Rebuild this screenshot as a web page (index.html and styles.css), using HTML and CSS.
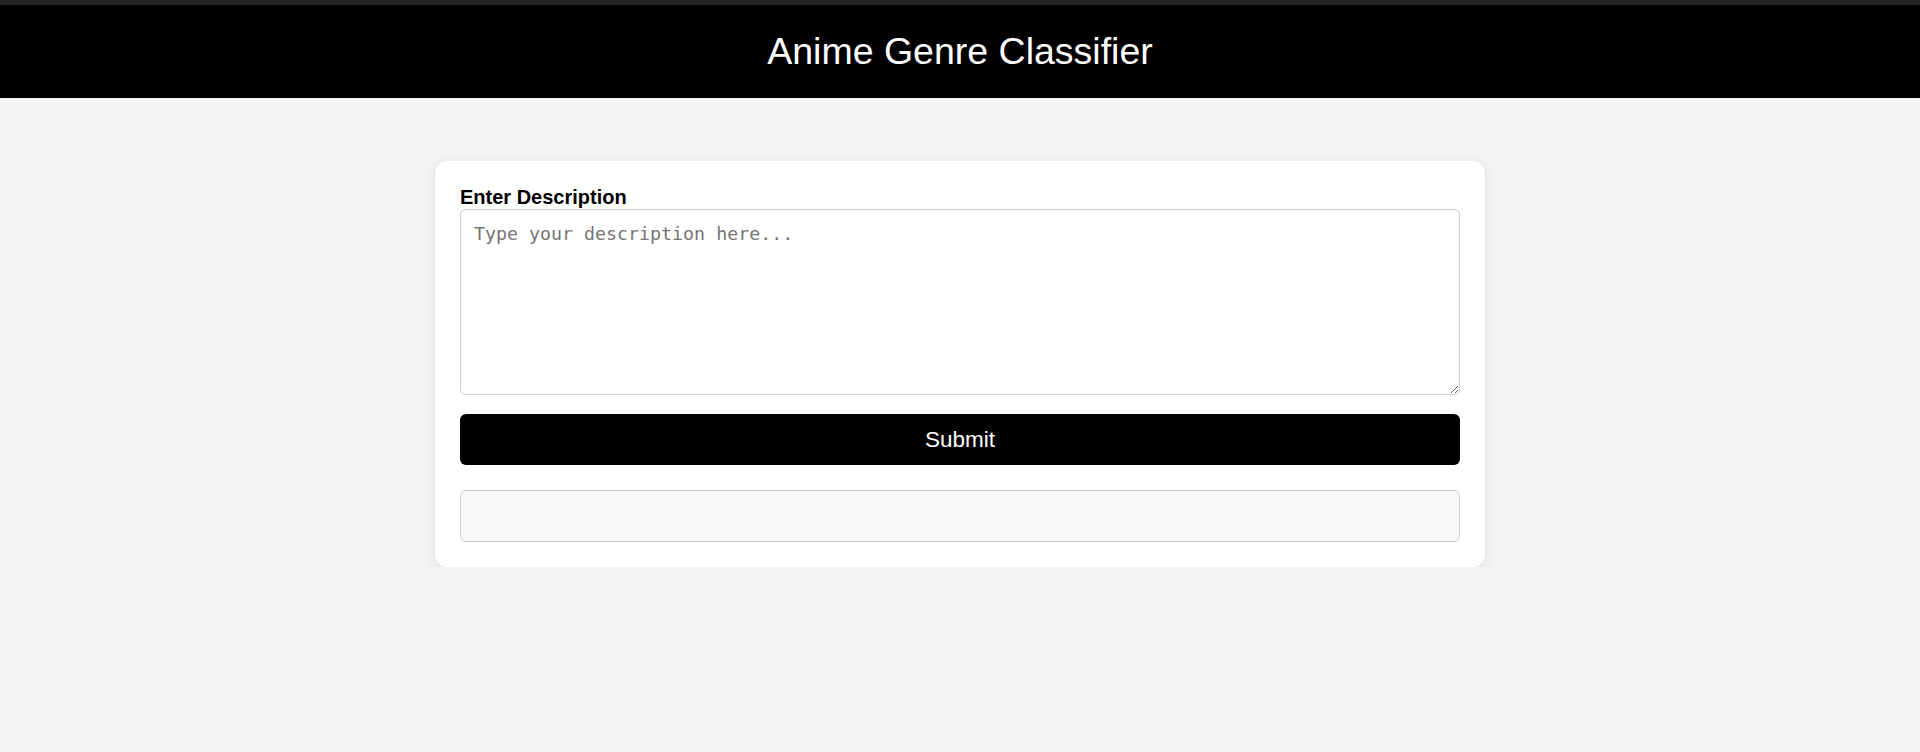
FILE: index.html
```html
<!DOCTYPE html>
<html lang="en">
<head>
<meta charset="utf-8">
<title>Anime Genre Classifier</title>
<link rel="stylesheet" href="styles.css">
</head>
<body>
<header class="site-header">
  <h1 class="site-title">Anime Genre Classifier</h1>
</header>
<main class="main">
  <form class="card" onsubmit="return false;">
    <label class="field-label" for="desc">Enter Description</label>
    <textarea id="desc" class="desc-input" placeholder="Type your description here..."></textarea>
    <button type="submit" class="submit-btn">Submit</button>
    <div class="result"></div>
  </form>
</main>
</body>
</html>
```

FILE: styles.css
```css
html, body {
  margin: 0;
  padding: 0;
}

body {
  background: #f4f4f4;
  font-family: "Liberation Sans", Arial, sans-serif;
  color: #000;
}

.site-header {
  border-top: 5px solid #262626;
  background: #000;
  color: #fff;
  text-align: center;
  padding: 25px 0;
}

.site-title {
  margin: 0;
  font-size: 37.5px;
  font-weight: normal;
  line-height: 43px;
}

.main {
  padding-top: 63px;
}

.card {
  width: 1050px;
  box-sizing: border-box;
  margin: 0 auto;
  padding: 25px;
  background: #fff;
  border-radius: 12px;
  box-shadow: 0 2px 12px rgba(0, 0, 0, 0.1);
  display: flex;
  flex-direction: column;
}

.field-label {
  display: block;
  font-weight: bold;
  font-size: 20px;
  line-height: 23px;
}

.desc-input {
  display: block;
  width: 100%;
  height: 186px;
  box-sizing: border-box;
  margin: 0;
  padding: 12px 13px;
  border: 1px solid #ccc;
  border-radius: 5px;
  font-family: "DejaVu Sans Mono", "Liberation Mono", monospace;
  font-size: 18.3px;
  line-height: 23px;
  resize: vertical;
  background: #fff;
}

.desc-input::placeholder {
  color: #757575;
}

.submit-btn {
  margin-top: 19px;
  width: 100%;
  height: 51px;
  border: none;
  border-radius: 6px;
  background: #000;
  color: #fff;
  font-family: "Liberation Sans", Arial, sans-serif;
  font-size: 22.5px;
  cursor: pointer;
}

.result {
  margin-top: 25px;
  height: 52px;
  box-sizing: border-box;
  background: #f8f8f8;
  border: 1px solid #ccc;
  border-radius: 6px;
}
```
